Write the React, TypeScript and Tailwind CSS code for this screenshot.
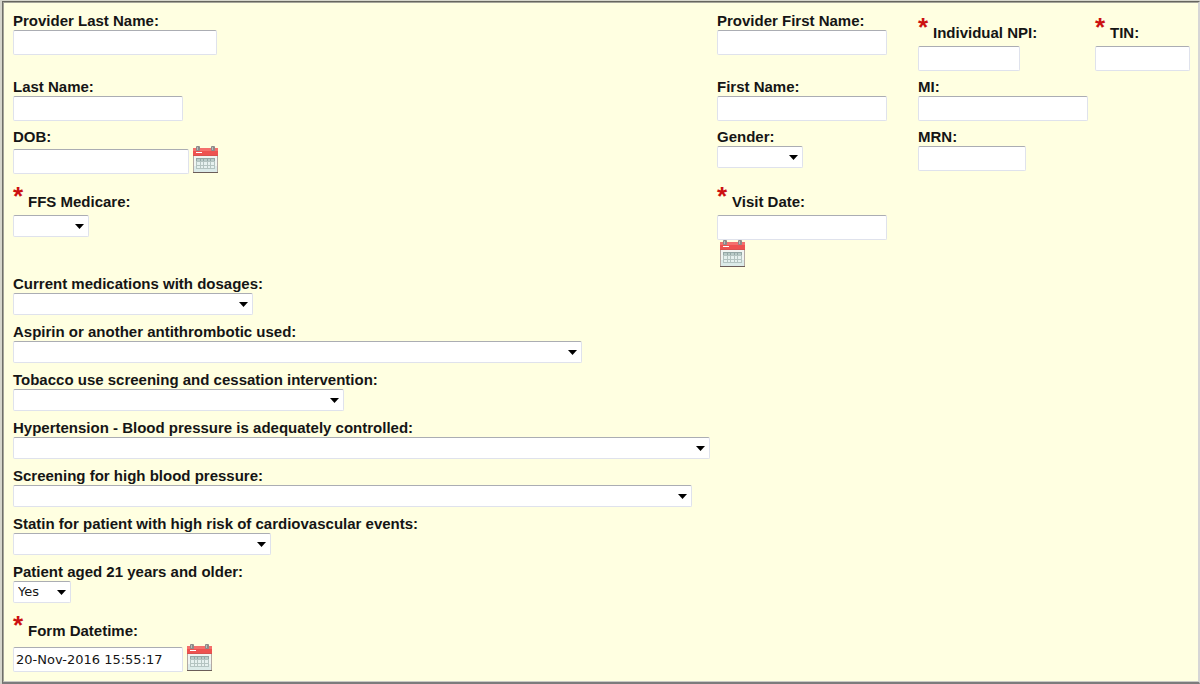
import { useId, useState } from "react";

function CalendarIcon() {
  return (
    <svg width="25" height="28" viewBox="0 0 25 28" aria-hidden="true">
      <rect x="0" y="2" width="25" height="25" fill="#b3aaa4" />
      <rect x="1" y="9" width="23" height="17" fill="#f1f5f2" />
      <rect x="1" y="20" width="23" height="6" fill="#dcebe9" />
      <rect x="0" y="26" width="25" height="1" fill="#6b5d59" />
      <rect x="0" y="2" width="25" height="8" fill="#ee5250" />
      <rect x="0" y="2" width="25" height="3" fill="#f4706c" />
      <rect x="0" y="9" width="25" height="1" fill="#d9514e" />
      <rect x="3" y="6" width="6" height="1" fill="#ffffff" />
      <rect x="3" y="0" width="4" height="5" rx="1" fill="#8d8a8a" />
      <rect x="4" y="1" width="1" height="3" fill="#b9bcbc" />
      <rect x="18" y="0" width="4" height="5" rx="1" fill="#8d8a8a" />
      <rect x="19" y="1" width="1" height="3" fill="#b9bcbc" />
      <rect x="3" y="12" width="19" height="11" fill="#b4c4c1" />
      <rect x="3" y="12" width="19" height="3" fill="#94a7a5" />
      <path
        d="M4 13h3v2H4zM8 13h2v2H8zM11 13h3v2h-3zM15 13h2v2h-2zM18 13h3v2h-3z"
        fill="#b9cbc8"
      />
      <path
        d="M4 16h3v3H4zM8 16h2v3H8zM11 16h3v3h-3zM15 16h2v3h-2zM18 16h3v3h-3zM4 20h3v2H4zM8 20h2v2H8zM11 20h3v2h-3zM15 20h2v2h-2zM18 20h3v2h-3z"
        fill="#e6f1ef"
      />
    </svg>
  );
}

function FieldLabel({ id, text, required }: { id: string; text: string; required?: boolean }) {
  if (required) {
    return (
      <label htmlFor={id} className="flex h-[34px] items-start whitespace-nowrap">
        <span className="w-[15px] text-[26px] leading-[30px] text-[#cc1111]">*</span>
        <span className="pt-3 leading-[18px]">{text}</span>
      </label>
    );
  }
  return (
    <label htmlFor={id} className="block h-[18px] leading-[18px] whitespace-nowrap">
      {text}
    </label>
  );
}

type FieldProps = {
  label: string;
  width: string;
  required?: boolean;
  value?: string;
  calendar?: "beside" | "below";
  className?: string;
};

function TextField({ label, width, required, value = "", calendar, className = "" }: FieldProps) {
  const id = useId();
  const [text, setText] = useState(value);

  return (
    <div className={className}>
      <FieldLabel id={id} text={label} required={required} />
      <div className={calendar === "below" ? "flex flex-col items-start" : "flex items-end gap-1"}>
        <input
          id={id}
          type="text"
          value={text}
          onChange={(e) => setText(e.target.value)}
          className={`${width} h-[25px] rounded-[2px] border border-[#dfe2ec] border-t-[#abadb3] bg-white px-[2px] font-['DejaVu_Sans',sans-serif] text-[13px] font-normal`}
        />
        {calendar && (
          <button type="button" aria-label={`Pick ${label}`} className={calendar === "below" ? "ml-[3px]" : ""}>
            <CalendarIcon />
          </button>
        )}
      </div>
    </div>
  );
}

function SelectField({ label, width, required, value = "", className = "" }: FieldProps) {
  const id = useId();
  const [selected, setSelected] = useState(value);

  return (
    <div className={className}>
      <FieldLabel id={id} text={label} required={required} />
      <div className={`relative pb-px ${width}`}>
        <select
          id={id}
          value={selected}
          onChange={(e) => setSelected(e.target.value)}
          className="block h-[22px] w-full appearance-none rounded-[2px] border border-[#dfe2ec] border-t-[#abadb3] bg-white px-1 font-['DejaVu_Sans',sans-serif] text-[13px] leading-[20px] font-normal"
        >
          <option value=""></option>
          <option value="Yes">Yes</option>
          <option value="No">No</option>
        </select>
        <svg
          className="pointer-events-none absolute top-[9px] right-[5px]"
          width="9"
          height="5"
          viewBox="0 0 9 5"
          aria-hidden="true"
        >
          <path d="M0 0h9L4.500 5z" fill="#000000" />
        </svg>
      </div>
    </div>
  );
}

export default function App() {
  return (
    <div className="bg-[#d6d6cc] pt-px pb-px pl-[2px]">
      <form className="border border-t-[#66665e] border-r-[#d6d6d6] border-b-2 border-b-[#7c7c7c] border-l-[#6f6f68] font-['Liberation_Sans',Arial,sans-serif] text-[15px] font-bold text-[#151515]">
        <div className="grid grid-cols-[704fr_201fr_177fr_95fr] gap-y-[7px] border border-t-[#a5a59a] border-r-[#d6d6d6] border-b-[#c9c9c5] border-l-[#a5a59a] bg-[#ffffe1] pt-[9px] pr-[8px] pb-[9px] pl-[9px]">
          <TextField label="Provider Last Name:" width="w-[204px]" />
          <TextField label="Provider First Name:" width="w-[170px]" />
          <TextField label="Individual NPI:" width="w-[102px]" required />
          <TextField label="TIN:" width="w-[95px]" required />

          <TextField label="Last Name:" width="w-[170px]" />
          <TextField label="First Name:" width="w-[170px]" />
          <TextField label="MI:" width="w-[170px]" className="col-span-2" />

          <TextField label="DOB:" width="w-[176px]" calendar="beside" />
          <SelectField label="Gender:" width="w-[86px]" />
          <TextField label="MRN:" width="w-[108px]" className="col-span-2" />

          <SelectField label="FFS Medicare:" width="w-[76px]" required />
          <TextField label="Visit Date:" width="w-[170px]" required calendar="below" className="col-span-3" />

          <SelectField label="Current medications with dosages:" width="w-[240px]" className="col-span-4" />
          <SelectField label="Aspirin or another antithrombotic used:" width="w-[569px]" className="col-span-4" />
          <SelectField label="Tobacco use screening and cessation intervention:" width="w-[331px]" className="col-span-4" />
          <SelectField label="Hypertension - Blood pressure is adequately controlled:" width="w-[697px]" className="col-span-4" />
          <SelectField label="Screening for high blood pressure:" width="w-[679px]" className="col-span-4" />
          <SelectField label="Statin for patient with high risk of cardiovascular events:" width="w-[258px]" className="col-span-4" />
          <SelectField label="Patient aged 21 years and older:" width="w-[58px]" value="Yes" className="col-span-4" />
          <TextField
            label="Form Datetime:"
            width="w-[170px]"
            required
            value="20-Nov-2016 15:55:17"
            calendar="beside"
            className="col-span-4 -mt-px"
          />
        </div>
      </form>
    </div>
  );
}
